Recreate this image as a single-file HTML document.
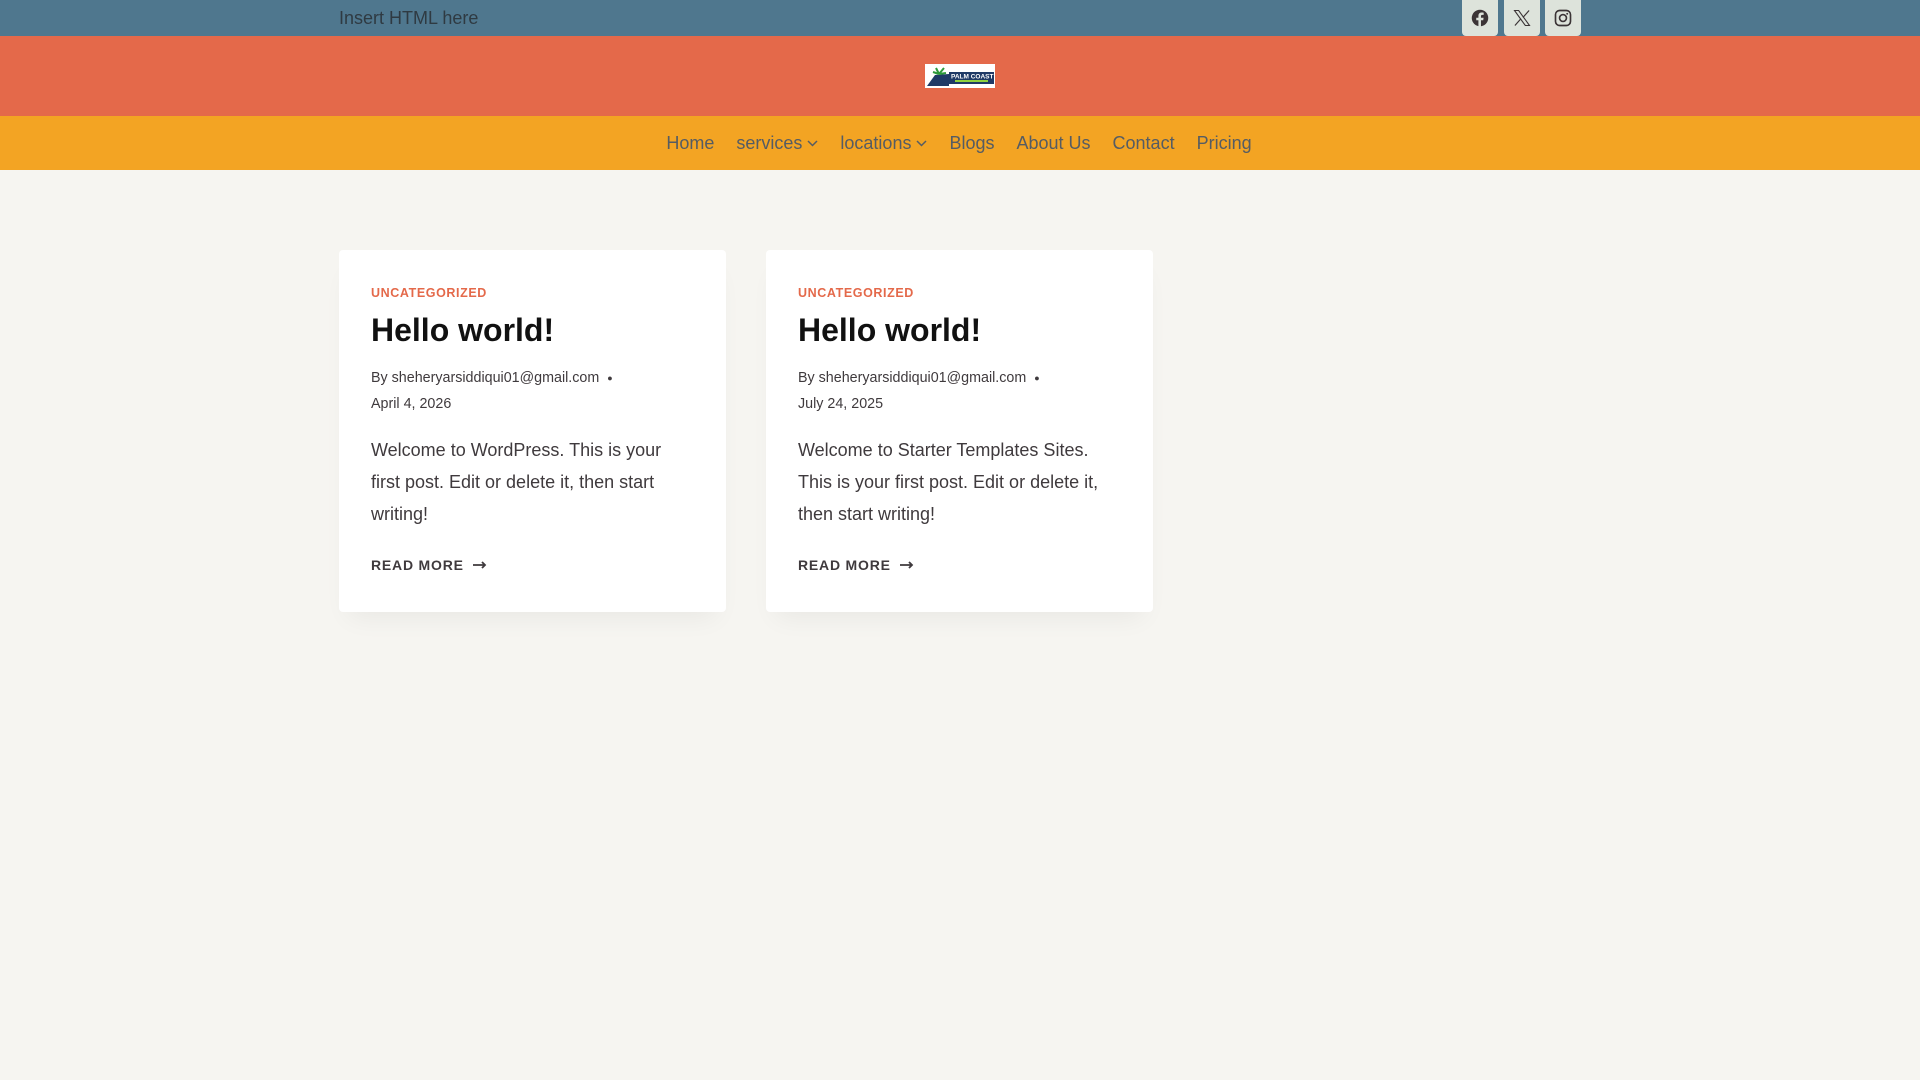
<!DOCTYPE html>
<html><head><meta charset="utf-8"><style>
*{box-sizing:border-box;margin:0;padding:0}
body{width:1920px;height:1080px;background:#f6f5f1;font-family:"Liberation Sans",sans-serif;position:relative;overflow:hidden}
.top{position:absolute;top:0;left:0;width:1920px;height:36px;background:#4f778e}
.top .txt{position:absolute;left:339px;top:8px;font-size:18px;color:#2f3a42}
.soc{position:absolute;top:0;width:36px;height:36px;background:#dde3db;border-radius:0 0 4px 4px;display:flex;align-items:center;justify-content:center}
.hdr{position:absolute;top:36px;left:0;width:1920px;height:80px;background:#e4694a}
.logo{position:absolute;left:925px;top:28px;width:70px;height:24px;background:#fff}
.nav{position:absolute;top:116px;left:0;width:1920px;height:54px;background:#f3a423;display:flex;justify-content:center;align-items:center;padding-right:2px}
.nav span{font-size:18px;color:#555c63;margin:0 11px;display:flex;align-items:center}
.nav svg{margin-left:5px}
.card{position:absolute;top:250px;width:387px;height:362px;background:#fff;border-radius:4px;box-shadow:0 15px 25px -10px rgba(0,0,0,.06);padding:0 32px}
.cat{position:absolute;top:36px;left:32px;font-size:12.5px;font-weight:bold;color:#e4694a;letter-spacing:.6px}
.ttl{position:absolute;top:62px;left:32px;font-size:32px;font-weight:bold;color:#111}
.meta{position:absolute;top:116px;left:32px;font-size:14.3px;color:#3f3a3d;line-height:25px}
.body{position:absolute;top:184px;left:32px;width:303px;font-size:18px;line-height:32px;color:#3f3a3d}
.rm{position:absolute;top:307px;left:32px;font-size:14px;font-weight:bold;color:#3f3a3d;letter-spacing:.8px;display:flex;align-items:center}
</style></head><body>
<div class="top"><div class="txt">Insert HTML here</div>
<div class="soc" style="left:1462px"><svg width="18" height="18" viewBox="0 0 24 24"><circle cx="12" cy="12" r="11" fill="#3b3436"/><path d="M13.3 24V15h3l.5-3.4h-3.5V9.5c0-1 .4-1.7 1.8-1.7h1.8V4.8c-.4-.1-1.5-.2-2.7-.2-2.7 0-4.3 1.6-4.3 4.5v2.5H7v3.4h2.9V24z" fill="#dde3db"/></svg></div>
<div class="soc" style="left:1504px"><svg width="20" height="20" viewBox="0 0 24 24"><path d="M3 3h5l13 18h-5z" fill="none" stroke="#3b3436" stroke-width="1.3"/><path d="M20.5 3l-7.3 8.3M3.5 21l7.3-8.3" stroke="#3b3436" stroke-width="1.4"/></svg></div>
<div class="soc" style="left:1545px"><svg width="18" height="18" viewBox="0 0 24 24"><rect x="2" y="2" width="20" height="20" rx="5.5" fill="none" stroke="#3b3436" stroke-width="2.2"/><circle cx="12" cy="12" r="4.6" fill="none" stroke="#3b3436" stroke-width="2.2"/><circle cx="17.6" cy="6.4" r="1.3" fill="#3b3436"/></svg></div>
</div>
<div class="hdr"><div class="logo"><svg width="70" height="24" viewBox="0 0 70 24"><rect width="70" height="24" fill="#fff"/><rect x="24" y="8" width="45" height="12" fill="#1f3a66"/><path d="M2 22l8-11 14-1v12z" fill="#1f3a66"/><path d="M14 10l-3-6M14 10l5-6M14 10l-6-2M14 10l7-1" stroke="#2e9a3a" stroke-width="2"/><text x="26" y="14.5" font-size="6.5" font-weight="bold" fill="#fff" font-family="Liberation Sans">PALM COAST</text><rect x="30" y="16" width="33" height="2" fill="#8fd13f"/></svg></div></div>
<div class="nav">
<span>Home</span>
<span>services<svg width="11" height="7" viewBox="0 0 11 7"><path d="M1 1l4.5 4.5L10 1" fill="none" stroke="#555c63" stroke-width="1.5"/></svg></span>
<span>locations<svg width="11" height="7" viewBox="0 0 11 7"><path d="M1 1l4.5 4.5L10 1" fill="none" stroke="#555c63" stroke-width="1.5"/></svg></span>
<span>Blogs</span><span>About Us</span><span>Contact</span><span>Pricing</span>
</div>
<div class="card" style="left:339px">
<div class="cat">UNCATEGORIZED</div><div class="ttl">Hello world!</div>
<div class="meta">By sheheryarsiddiqui01@gmail.com &nbsp;<span style="font-size:9px;position:relative;top:-1px">●</span><br>April 4, 2026</div>
<div class="body">Welcome to WordPress. This is your first post. Edit or delete it, then start writing!</div>
<div class="rm">READ MORE&nbsp;&nbsp;<svg width="14" height="8" viewBox="0 0 14 8"><path d="M0 4h12M9 1l3 3-3 3" fill="none" stroke="#3f3a3d" stroke-width="1.8"/></svg></div>
</div>
<div class="card" style="left:766px">
<div class="cat">UNCATEGORIZED</div><div class="ttl">Hello world!</div>
<div class="meta">By sheheryarsiddiqui01@gmail.com &nbsp;<span style="font-size:9px;position:relative;top:-1px">●</span><br>July 24, 2025</div>
<div class="body">Welcome to Starter Templates Sites. This is your first post. Edit or delete it, then start writing!</div>
<div class="rm">READ MORE&nbsp;&nbsp;<svg width="14" height="8" viewBox="0 0 14 8"><path d="M0 4h12M9 1l3 3-3 3" fill="none" stroke="#3f3a3d" stroke-width="1.8"/></svg></div>
</div>
</body></html>
